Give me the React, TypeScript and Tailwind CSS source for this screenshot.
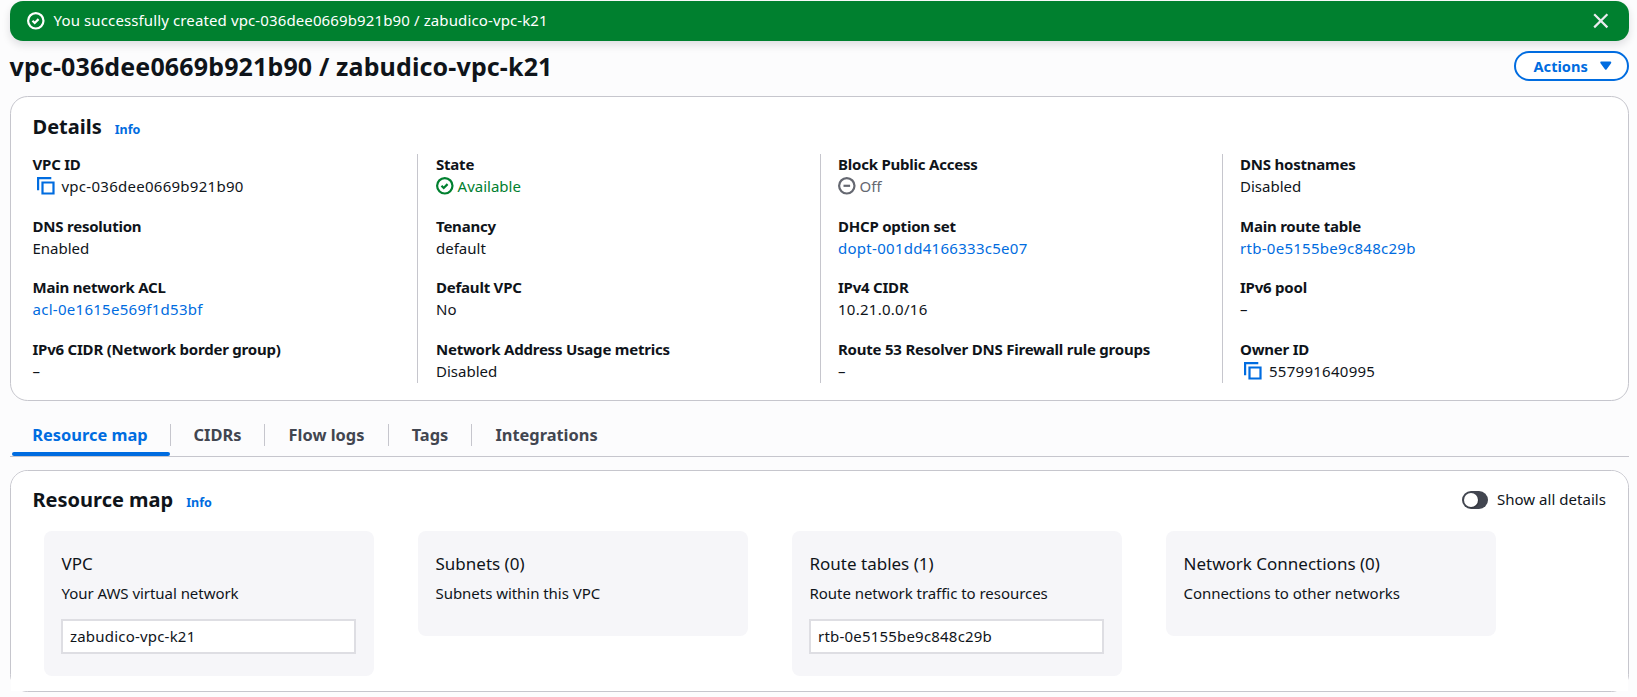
import type { ReactNode } from "react";

type IconProps = { className?: string; children: ReactNode };

function Icon({ className = "", children }: IconProps) {
  return (
    <svg
      viewBox="0 0 16 16"
      className={`h-[17.6px] w-[17.6px] shrink-0 overflow-visible fill-none stroke-current stroke-2 ${className}`}
    >
      {children}
    </svg>
  );
}

const CheckIcon = ({ className }: { className?: string }) => (
  <Icon className={className}>
    <circle cx="8" cy="8" r="7" />
    <path d="m5 8 2 2 3.521-3.521" />
  </Icon>
);

const MinusIcon = () => (
  <Icon>
    <circle cx="8" cy="8" r="7" />
    <path d="M11 8H5" />
  </Icon>
);

const CopyIcon = () => (
  <Icon className="ml-1 mr-[7.4px] text-[#006ce0]">
    <path d="M15 5H5v10h10V5Z" />
    <path d="M13 1H1v11" />
  </Icon>
);

type FieldProps = { label: string; children: ReactNode };

function Field({ label, children }: FieldProps) {
  return (
    <div>
      <div className="h-[21px] text-[15px] leading-[20px] font-bold tracking-[-0.22px]">{label}</div>
      <div className="flex h-[22px] items-center text-[15px] leading-[22px]">{children}</div>
    </div>
  );
}

const Id = ({ children }: { children: ReactNode }) => <span className="tracking-[0.27px]">{children}</span>;

const IdLink = ({ children }: { children: ReactNode }) => (
  <a href="#" className="tracking-[0.28px] text-[#006ce0]">
    {children}
  </a>
);

function Column({ className = "", children }: { className?: string; children: ReactNode }) {
  return <div className={`flex h-[229px] flex-col gap-[18.67px] border-[#c6c6cd] ${className}`}>{children}</div>;
}

function PanelTitle({ children }: { children: ReactNode }) {
  return (
    <div className="flex h-7 items-baseline gap-[13px] leading-[30px]">
      <h2 className="text-[20px] font-bold">{children}</h2>
      <a href="#" className="text-[12.5px] font-bold text-[#006ce0]">
        Info
      </a>
    </div>
  );
}

function MapCard({ title, description, item }: { title: string; description: string; item?: string }) {
  return (
    <div className={`w-[330px] rounded-lg bg-[#f6f6f9] pt-[21px] pr-[18px] pl-[17px] ${item ? "h-[145px]" : "h-[105px]"}`}>
      <div className="h-6 pl-[0.5px] text-[17px] leading-6">{title}</div>
      <div className="mt-[7px] h-5 pl-[0.5px] text-[15px] leading-5 tracking-[-0.04px]">{description}</div>
      {item && (
        <div className="mt-4 flex h-[35px] items-center border-2 border-[#dedee3] bg-white pl-[7px] text-[15px] tracking-[0.2px]">
          {item}
        </div>
      )}
    </div>
  );
}

const tabs = [
  { name: "Resource map", size: "w-[161px]", active: true },
  { name: "CIDRs", size: "w-[94px]" },
  { name: "Flow logs", size: "w-[124px]" },
  { name: "Tags", size: "w-[83px]" },
  { name: "Integrations", size: "w-[149px]" },
];

export default function App() {
  return (
    <div className="h-[697px] overflow-hidden bg-[#fcfcfd] pt-px pr-2 pl-[10px] font-['Noto_Sans',sans-serif] text-[#0f141a]">
      <div className="flex h-10 items-center rounded-[13px] bg-[#00802f] pr-[19px] pl-[17px] text-white shadow-[0_4px_8px_rgba(0,7,22,0.12)]">
        <CheckIcon />
        <span className="ml-[9px] pb-px text-[15px] tracking-[0.12px]">
          You successfully created vpc-036dee0669b921b90 / zabudico-vpc-k21
        </span>
        <Icon className="ml-auto text-[#ebebf0]">
          <path d="m2 2 12 12M14 2 2 14" />
        </Icon>
      </div>

      <div className="mt-[10px] flex h-[30px] items-center justify-between">
        <h1 className="-ml-[0.5px] text-[25px] leading-9 font-bold tracking-[0.14px]">
          vpc-036dee0669b921b90 / zabudico-vpc-k21
        </h1>
        <button className="flex h-[30px] w-[115px] items-center justify-between rounded-full border-2 border-[#006ce0] bg-white pr-[12px] pb-px pl-[17.5px] text-[14.6px] leading-[22px] font-bold text-[#006ce0]">
          Actions
          <Icon className="mt-px">
            <path d="M4 5h8l-4 5.5L4 5Z" className="fill-current" strokeLinejoin="round" />
          </Icon>
        </button>
      </div>

      <section className="mt-[15px] h-[305px] rounded-[17.6px] border border-[#c6c6cd] bg-white px-[22px] pt-[15px]">
        <div className="-ml-[0.5px]">
          <PanelTitle>Details</PanelTitle>
        </div>
        <div className="mt-[14px] grid grid-cols-[384px_403px_402px_1fr]">
          <Column className="-ml-[0.5px]">
            <Field label="VPC ID">
              <CopyIcon />
              <Id>vpc-036dee0669b921b90</Id>
            </Field>
            <Field label="DNS resolution">Enabled</Field>
            <Field label="Main network ACL">
              <IdLink>acl-0e1615e569f1d53bf</IdLink>
            </Field>
            <Field label="IPv6 CIDR (Network border group)">–</Field>
          </Column>
          <Column className="border-l pl-[18px]">
            <Field label="State">
              <CheckIcon className="mr-1 text-[#00802f]" />
              <span className="text-[#00802f]">Available</span>
            </Field>
            <Field label="Tenancy">default</Field>
            <Field label="Default VPC">No</Field>
            <Field label="Network Address Usage metrics">Disabled</Field>
          </Column>
          <Column className="border-l pl-[17px]">
            <Field label="Block Public Access">
              <span className="flex items-center gap-1 text-[#656871]">
                <MinusIcon />
                Off
              </span>
            </Field>
            <Field label="DHCP option set">
              <IdLink>dopt-001dd4166333c5e07</IdLink>
            </Field>
            <Field label="IPv4 CIDR">
              <Id>10.21.0.0/16</Id>
            </Field>
            <Field label="Route 53 Resolver DNS Firewall rule groups">–</Field>
          </Column>
          <Column className="border-l pl-[17px]">
            <Field label="DNS hostnames">Disabled</Field>
            <Field label="Main route table">
              <IdLink>rtb-0e5155be9c848c29b</IdLink>
            </Field>
            <Field label="IPv6 pool">–</Field>
            <Field label="Owner ID">
              <CopyIcon />
              <Id>557991640995</Id>
            </Field>
          </Column>
        </div>
      </section>

      <nav className="flex h-14 items-center border-b border-[#c6c6cd] pt-[13px]">
        {tabs.map((tab, i) => (
          <div
            key={tab.name}
            className={`relative flex h-[22px] items-center justify-center text-[16.4px] leading-[22px] font-bold whitespace-nowrap ${tab.size} ${
              i < tabs.length - 1 ? "border-r border-[#c6c6cd]" : ""
            } ${tab.active ? "text-[#006ce0]" : "text-[#424650]"}`}
          >
            {tab.name}
            {tab.active && <span className="absolute top-[28px] left-[2px] h-1 w-[158px] rounded-full bg-[#006ce0]" />}
          </div>
        ))}
      </nav>

      <section className="mt-[13px] h-[222px] rounded-[17.6px] border border-[#c6c6cd]">
        <div className="h-full rounded-t-[16.6px] bg-white px-[22px] pt-[14px]">
          <div className="flex items-center justify-between">
            <div className="-ml-[0.5px]">
              <PanelTitle>Resource map</PanelTitle>
            </div>
            <label className="flex items-center gap-[9px] text-[15px] leading-5 tracking-[0.04px]">
              <span className="mt-px flex h-[18px] w-[26px] items-center rounded-full bg-[#424650] pl-[2px]">
                <span className="h-[14px] w-[14px] rounded-full bg-white shadow-[1px_1px_1px_rgba(0,0,0,0.25)]" />
              </span>
              Show all details
            </label>
          </div>
          <div className="mt-[18px] flex items-start gap-11 pl-[11px]">
            <MapCard title="VPC" description="Your AWS virtual network" item="zabudico-vpc-k21" />
            <MapCard title="Subnets (0)" description="Subnets within this VPC" />
            <MapCard
              title="Route tables (1)"
              description="Route network traffic to resources"
              item="rtb-0e5155be9c848c29b"
            />
            <MapCard title="Network Connections (0)" description="Connections to other networks" />
          </div>
        </div>
      </section>
    </div>
  );
}
